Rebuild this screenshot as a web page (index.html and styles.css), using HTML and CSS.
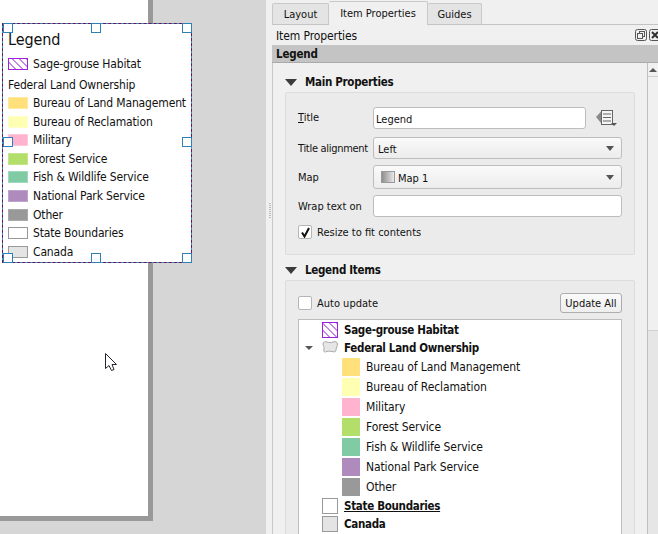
FILE: index.html
```html
<!DOCTYPE html>
<html lang="en">
<head>
    <meta charset="UTF-8">
    <title>Item Properties</title>
    <link rel="stylesheet" href="styles.css">
</head>
<body>
    <div class="canvas">
        <div class="page"></div>

        <div class="legend-item">
            <div class="legend-inner">
                <div class="legend-title">Legend</div>
                <div class="legend-row first"><span class="swatch hatch"></span>Sage-grouse Habitat</div>
                <div class="legend-group">Federal Land Ownership</div>
                <div class="legend-row"><span class="swatch blm"></span>Bureau of Land Management</div>
                <div class="legend-row"><span class="swatch bor"></span>Bureau of Reclamation</div>
                <div class="legend-row"><span class="swatch mil"></span>Military</div>
                <div class="legend-row"><span class="swatch fs"></span>Forest Service</div>
                <div class="legend-row"><span class="swatch fws"></span>Fish &amp; Wildlife Service</div>
                <div class="legend-row"><span class="swatch nps"></span>National Park Service</div>
                <div class="legend-row"><span class="swatch other"></span>Other</div>
                <div class="legend-row"><span class="swatch state"></span>State Boundaries</div>
                <div class="legend-row"><span class="swatch canada"></span>Canada</div>
            </div>
            <span class="handle tl"></span>
            <span class="handle tm"></span>
            <span class="handle tr"></span>
            <span class="handle ml"></span>
            <span class="handle mr"></span>
            <span class="handle bl"></span>
            <span class="handle bm"></span>
            <span class="handle br"></span>
        </div>

        <svg class="cursor" width="14" height="20" viewBox="0 0 14 20">
            <path d="M1.5 1.500V16.500L5 13.500L7.500 18.500L10 17.500L8 12.500H12.500Z" fill="#fff" stroke="#23232e" stroke-width="1"/>
        </svg>
    </div>

    <div class="grip"><span class="grip-dots"></span></div>

    <div class="panel">
        <div class="tabs">
            <div class="tab">Layout</div>
            <div class="tab active">Item Properties</div>
            <div class="tab">Guides</div>
        </div>

        <div class="dock-title">
            <span>Item Properties</span>
            <span class="dock-buttons">
                <svg width="12" height="12" viewBox="0 0 12 12">
                    <rect x="0.5" y="0.5" width="11" height="11" rx="2" fill="none" stroke="#555"/>
                    <rect x="4.500" y="2.500" width="5" height="5" fill="none" stroke="#555"/>
                    <rect x="2.500" y="4.500" width="5" height="5" fill="#f0f0f0" stroke="#555"/>
                </svg>
                <svg width="12" height="12" viewBox="0 0 12 12">
                    <rect x="0.5" y="0.5" width="11" height="11" rx="2" fill="none" stroke="#555"/>
                    <path d="M3 3L9 9M9 3L3 9" stroke="#333" stroke-width="2"/>
                </svg>
            </span>
        </div>

        <div class="item-header">Legend</div>

        <div class="scroll-area">
            <div class="content">
                <div class="section-head"><span class="collapse"></span>Main Properties</div>
                <div class="group main-group">
                    <div class="form-grid">
                        <label class="first-label"><u>T</u>itle</label>
                        <div class="title-field">
                            <div class="input">Legend</div>
                            <svg class="expr-icon" width="24" height="20" viewBox="0 0 24 20">
                                <path d="M2 9L7 3.500V15Z" fill="#8a8a8a"/>
                                <rect x="7.500" y="2.500" width="11" height="14" fill="#f4f4f4" stroke="#666"/>
                                <path d="M9 6H17M9 9.500H17M9 13H17" stroke="#666"/>
                                <path d="M17 15H23L20 18Z" fill="#555"/>
                            </svg>
                        </div>
                        <label class="tight">Title alignment</label>
                        <div class="combo">Left<span class="arrow"></span></div>
                        <label>Map</label>
                        <div class="combo tall"><span class="map-icon"></span>Map 1<span class="arrow"></span></div>
                        <label>Wrap text on</label>
                        <div class="input"></div>
                    </div>
                    <div class="check-row resize">
                        <span class="checkbox">
                            <svg width="11" height="11" viewBox="0 0 11 11"><path d="M2 5.500L4.500 9.500L9 1" fill="none" stroke="#111" stroke-width="2"/></svg>
                        </span>
                        <span class="check-label">Resize to fit contents</span>
                    </div>
                </div>

                <div class="section-head second"><span class="collapse"></span>Legend Items</div>
                <div class="group items-group">
                    <div class="update-row">
                        <div class="check-row"><span class="checkbox"></span><span class="check-label">Auto update</span></div>
                        <div class="button">Update All</div>
                    </div>
                    <div class="tree">
                        <div class="node top"><span class="icon hatch"></span>Sage-grouse Habitat</div>
                        <div class="node top">
                            <span class="expand"></span>
                            <svg class="icon" width="16" height="16" viewBox="0 0 16 16">
                                <path d="M1 4C1 2 3 1.500 5 2C7 2.500 9 3 11 2C13 1 15.500 2 15.500 4C15.500 6 14 8 14 10C14 12 12 12 10 11.500C8 11 5 11 3.500 12C2 12.500 1.500 11 2 9C2.500 7 1 6 1 4Z" fill="#e6e6e6" stroke="#a6a6a6"/>
                            </svg>
                            Federal Land Ownership
                        </div>
                        <div class="node leaf"><span class="leaf-swatch blm"></span>Bureau of Land Management</div>
                        <div class="node leaf"><span class="leaf-swatch bor"></span>Bureau of Reclamation</div>
                        <div class="node leaf"><span class="leaf-swatch mil"></span>Military</div>
                        <div class="node leaf"><span class="leaf-swatch fs"></span>Forest Service</div>
                        <div class="node leaf"><span class="leaf-swatch fws"></span>Fish &amp; Wildlife Service</div>
                        <div class="node leaf"><span class="leaf-swatch nps"></span>National Park Service</div>
                        <div class="node leaf"><span class="leaf-swatch other"></span>Other</div>
                        <div class="node top"><span class="icon state"></span><u>State Boundaries</u></div>
                        <div class="node top"><span class="icon canada"></span>Canada</div>
                    </div>
                </div>
            </div>

            <div class="scrollbar">
                <div class="scroll-up"><span class="scroll-arrow"></span></div>
                <div class="scroll-thumb"></div>
            </div>
        </div>
    </div>
</body>
</html>
```

FILE: styles.css
```css
html, body {
    margin: 0;
    padding: 0;
    height: 534px;
    overflow: hidden;
}

body {
    display: flex;
    width: 658px;
    background-color: #f0f0f0;
    font-family: "DejaVu Sans", sans-serif;
    font-stretch: condensed;
    font-size: 12px;
    color: #111;
}

/* Layout canvas */
.canvas {
    position: relative;
    flex: none;
    width: 266px;
    height: 534px;
    background-color: #d6d6d6;
}

.page {
    box-sizing: border-box;
    width: 153px;
    height: 521px;
    background-color: #fff;
    border-right: 5px solid #999;
    border-bottom: 5px solid #999;
}

.legend-item {
    position: absolute;
    left: 2px;
    top: 23px;
    box-sizing: border-box;
    width: 190px;
    height: 240px;
    border: 1px dashed #6b1550;
    background-color: #3d9ad1;
}

.legend-inner {
    box-sizing: border-box;
    height: 100%;
    padding: 6px 0 0 5px;
    background-color: #fff;
}

.legend-title {
    font-size: 16px;
    letter-spacing: -0.1px;
    line-height: 20px;
    height: 20px;
    margin-bottom: 5px;
}

.legend-row,
.legend-group {
    display: flex;
    align-items: center;
    height: 18.6px;
    line-height: 18px;
    letter-spacing: -0.15px;
    white-space: nowrap;
}

.legend-row.first {
    margin-bottom: 2.5px;
}

.legend-group {
    height: 17.6px;
}

.swatch {
    box-sizing: border-box;
    flex: none;
    width: 20px;
    height: 12px;
    margin-right: 5px;
}

.handle {
    position: absolute;
    box-sizing: border-box;
    width: 10px;
    height: 10px;
    background-color: #fff;
    border: 1px solid #2f80b5;
}

.tl { left: 0; top: -1px; }
.tm { left: 88px; top: -1px; }
.tr { right: -1px; top: -1px; }
.ml { left: 0; top: 113px; }
.mr { right: -1px; top: 113px; }
.bl { left: 0; bottom: -1px; }
.bm { left: 88px; bottom: -1px; }
.br { right: -1px; bottom: -1px; }

.cursor {
    position: absolute;
    left: 104px;
    top: 352px;
}

/* Fill colours shared by the legend and the tree */
.blm { background-color: #ffe07a; border: 1px solid #ffe99f; }
.bor { background-color: #ffffb3; border: 1px solid #ffffc9; }
.mil { background-color: #ffb3cf; border: 1px solid #ffc9dd; }
.fs { background-color: #b3de69; border: 1px solid #c4e58c; }
.fws { background-color: #80cba4; border: 1px solid #a0d8bb; }
.nps { background-color: #ae8abd; border: 1px solid #c0a3cc; }
.other { background-color: #999; border: 1px solid #aaa; }
.state { background-color: #fff; border: 1px solid #999; }
.canada { background-color: #e4e4e4; border: 1px solid #999; }

.hatch {
    background-color: #fff;
    background-image: repeating-linear-gradient(45deg, #fff 0, #fff 4px, #c58ae6 4px, #c58ae6 5px);
    border: 1px solid #a020e0;
}

.grip {
    flex: none;
    width: 6px;
    padding-top: 203px;
    box-sizing: border-box;
    background-color: #f0f0f0;
}

.grip-dots {
    display: block;
    width: 2px;
    height: 16px;
    margin-left: 3px;
    background-image: repeating-linear-gradient(#bbb 0, #bbb 1px, transparent 1px, transparent 2px);
}

/* Right hand panel */
.panel {
    flex: none;
    width: 386px;
    height: 534px;
}

.tabs {
    display: flex;
    align-items: flex-end;
    box-sizing: border-box;
    height: 25px;
    border-bottom: 1px solid #c4c4c4;
}

.tab {
    box-sizing: border-box;
    width: 57px;
    height: 21px;
    font-size: 11px;
    line-height: 22px;
    text-align: center;
    background-color: #e4e4e4;
    border: 1px solid #c8c8c8;
    border-bottom: none;
    border-radius: 2px 2px 0 0;
}

.tab + .tab {
    border-left: none;
}

.tab.active {
    width: 99px;
    height: 24px;
    margin-bottom: -1px;
    line-height: 24px;
    background-color: #f0f0f0;
}

.tab:last-child {
    width: 54px;
}

.dock-title {
    display: flex;
    justify-content: space-between;
    align-items: center;
    box-sizing: border-box;
    height: 20px;
    padding: 2px 0 0 4px;
    letter-spacing: -0.1px;
}

.dock-buttons {
    display: flex;
    gap: 2px;
    margin-right: -3px;
    margin-top: -2px;
}

.item-header {
    box-sizing: border-box;
    height: 18px;
    line-height: 19px;
    padding-left: 4px;
    font-size: 11.5px;
    font-weight: 700;
    letter-spacing: -0.2px;
    background-color: #c4c4c4;
    border-bottom: 1px solid #aaa;
}

.scroll-area {
    display: flex;
    height: 471px;
    overflow: hidden;
    border-left: 1px solid #c9c9c9;
}

.content {
    box-sizing: border-box;
    flex: none;
    width: 375px;
    padding: 0 12px;
    border-right: 1px solid #bfbfbf;
}

.section-head {
    display: flex;
    align-items: center;
    box-sizing: border-box;
    height: 18px;
    margin-top: 10px;
    margin-bottom: 1px;
    font-size: 11.5px;
    font-weight: 700;
    letter-spacing: -0.3px;
}

.section-head.second {
    margin-top: 6px;
}

.collapse {
    width: 0;
    height: 0;
    margin-right: 8px;
    border-left: 6px solid transparent;
    border-right: 6px solid transparent;
    border-top: 7px solid #3c3c3c;
}

.group {
    box-sizing: border-box;
    background-color: #ebebeb;
    border: 1px solid #dcdcdc;
    border-radius: 2px;
    padding: 0 12px;
    font-size: 11px;
}

.main-group {
    height: 163px;
    padding-top: 14px;
}

.items-group {
    height: 300px;
    padding-top: 12px;
}

.form-grid {
    display: grid;
    grid-template-columns: 75px 249px;
    grid-template-rows: 24px 22px 24px 22px;
    row-gap: 6px;
    align-items: center;
}

.form-grid > * {
    white-space: nowrap;
}

.form-grid label.tight {
    letter-spacing: -0.3px;
}

.first-label {
    align-self: start;
    line-height: 22px;
}

.title-field {
    display: flex;
    align-items: center;
    align-self: start;
}

.input,
.combo {
    box-sizing: border-box;
    display: flex;
    align-items: center;
    height: 22px;
    padding: 2px 0 0 2px;
    background-color: #fff;
    border: 1px solid #bdbdbd;
    border-radius: 3px;
}

.title-field .input {
    width: 213px;
    flex: none;
}

.expr-icon {
    margin-left: 8px;
}

.combo {
    position: relative;
    padding-left: 4px;
    background-image: linear-gradient(#fafafa, #ececec);
}

.combo.tall {
    height: 24px;
}

.arrow {
    position: absolute;
    right: 7px;
    top: 50%;
    margin-top: -2px;
    width: 0;
    height: 0;
    border-left: 4px solid transparent;
    border-right: 4px solid transparent;
    border-top: 5px solid #555;
}

.map-icon {
    box-sizing: border-box;
    width: 14px;
    height: 12px;
    margin: -2px 3px 0;
    background-image: linear-gradient(90deg, #8f8f8f, #e8e8e8);
    border: 1px solid #9a9a9a;
}

.check-row {
    display: flex;
    align-items: center;
    white-space: nowrap;
}

.check-row.resize {
    margin-top: 8px;
}

.checkbox {
    box-sizing: border-box;
    display: flex;
    align-items: center;
    justify-content: center;
    width: 14px;
    height: 14px;
    margin-right: 5px;
    background-color: #fff;
    border: 1px solid #b5b5b5;
    border-radius: 2px;
}

.update-row {
    display: flex;
    justify-content: space-between;
    align-items: center;
    height: 20px;
    margin-bottom: 6px;
}

.button {
    box-sizing: border-box;
    width: 62px;
    height: 20px;
    line-height: 19px;
    text-align: center;
    background-image: linear-gradient(#fafafa, #eee);
    border: 1px solid #adadad;
    border-radius: 3px;
}

.tree {
    box-sizing: border-box;
    width: 324px;
    height: 230px;
    padding-top: 1px;
    font-size: 12px;
    background-color: #fff;
    border: 1px solid #bdbdbd;
    border-bottom: none;
}

.node {
    display: flex;
    align-items: center;
    white-space: nowrap;
}

.node.top {
    position: relative;
    height: 18px;
    padding-left: 23px;
    font-size: 11.5px;
    font-weight: 700;
    letter-spacing: -0.3px;
}

.node.leaf {
    height: 20px;
    padding-left: 43px;
    letter-spacing: -0.1px;
}

.icon {
    box-sizing: border-box;
    flex: none;
    width: 16px;
    height: 16px;
    margin-right: 6px;
}

.expand {
    position: absolute;
    left: 6px;
    top: 7px;
    width: 0;
    height: 0;
    border-left: 4px solid transparent;
    border-right: 4px solid transparent;
    border-top: 4px solid #555;
}

.leaf-swatch {
    flex: none;
    width: 18px;
    height: 18px;
    margin-right: 6px;
    border: none;
}

.scrollbar {
    flex: none;
    width: 10px;
    background-color: #e6e6e6;
}

.scroll-up {
    display: flex;
    justify-content: center;
    box-sizing: border-box;
    height: 14px;
    padding-top: 5px;
    background-color: #f0f0f0;
    border-bottom: 1px solid #cfcfcf;
}

.scroll-arrow {
    width: 0;
    height: 0;
    border-left: 4px solid transparent;
    border-right: 4px solid transparent;
    border-bottom: 4px solid #555;
}

.scroll-thumb {
    height: 253px;
    background-color: #f0f0f0;
    border-bottom: 1px solid #cfcfcf;
}
```
